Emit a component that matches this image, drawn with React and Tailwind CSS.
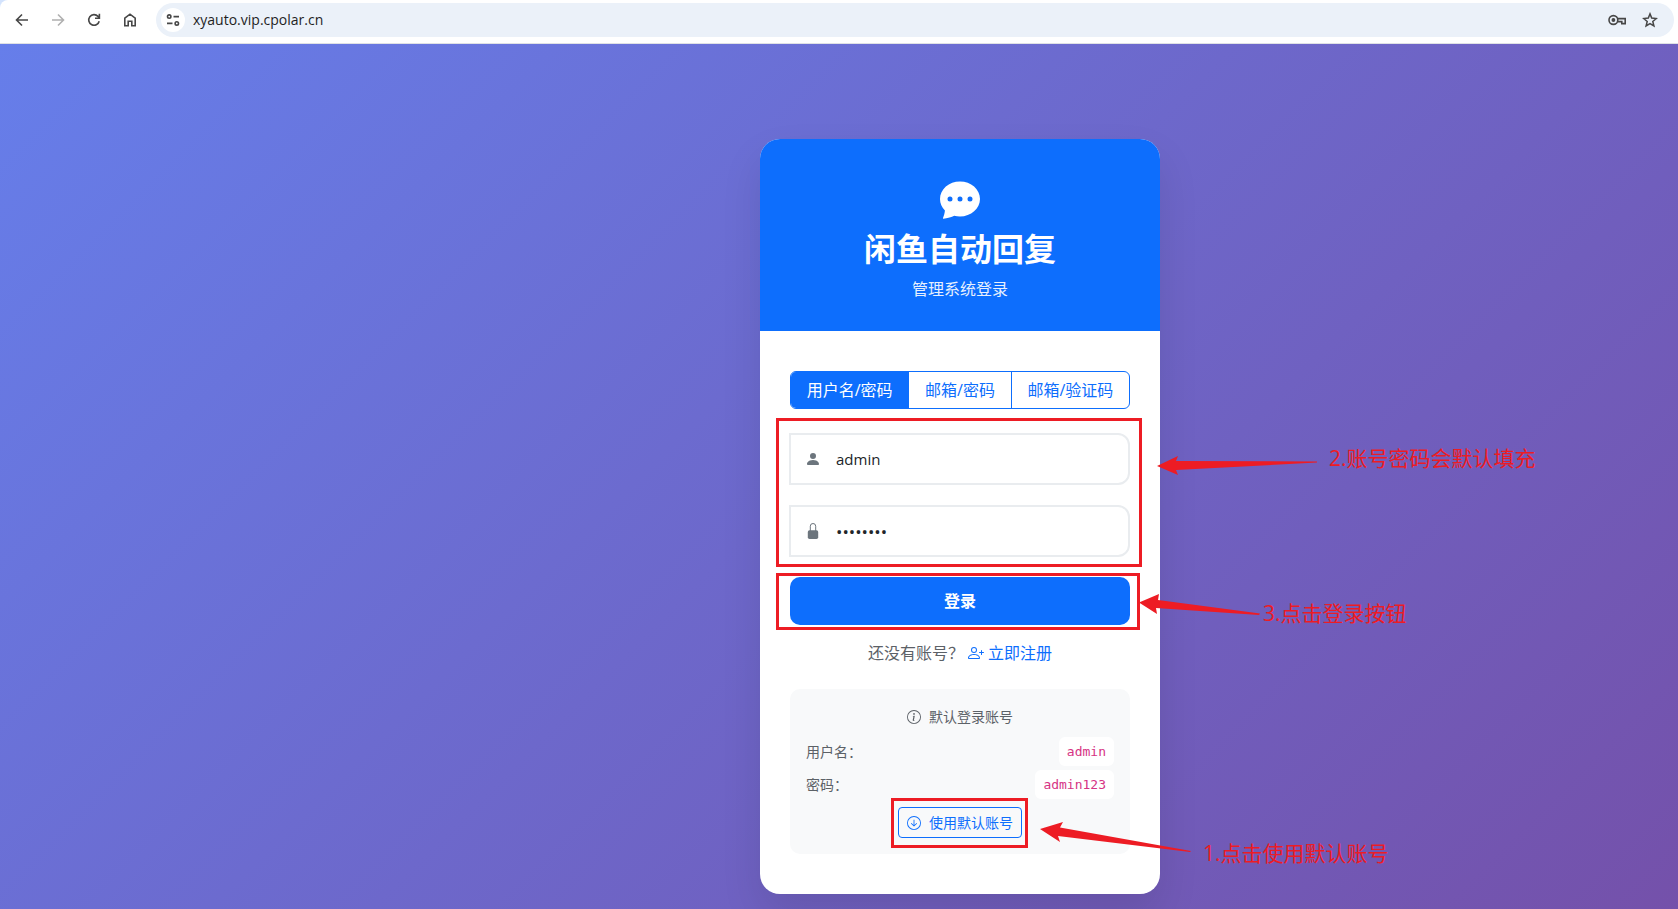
import { useState } from "react";
import {
  BsChatDotsFill,
  BsPersonFill,
  BsPersonPlus,
  BsInfoCircle,
  BsArrowDownCircle,
} from "react-icons/bs";

const TABS = ["用户名/密码", "邮箱/密码", "邮箱/验证码"];

function BrowserBar() {
  const line = { fill: "none", stroke: "currentColor", strokeWidth: 1.6 };
  return (
    <div className="bg-[#d3e3fd]">
      <header className="flex h-11 items-start rounded-tl-lg border-b border-[#dfe1e5] bg-white pt-[3px] pr-1 text-[#474747]">
        <nav className="flex h-[34px] flex-1 items-center gap-5 pl-3.5" aria-label="browser">
          <button type="button" aria-label="Back" className="size-4">
            <svg viewBox="0 0 16 16" className="size-4" {...line}>
              <path d="M14 8H3M8 2.5 2.5 8 8 13.5" />
            </svg>
          </button>
          <button type="button" aria-label="Forward" className="size-4 text-[#b0b0b0]">
            <svg viewBox="0 0 16 16" className="size-4" {...line}>
              <path d="M2 8h11M8 2.5 13.5 8 8 13.5" />
            </svg>
          </button>
          <button type="button" aria-label="Reload" className="size-4">
            <svg viewBox="0 0 16 16" className="size-4" {...line}>
              <path d="M13.2 9.2A5.3 5.3 0 1 1 12 4.4l1.3 1.4M13.4 1.8v4.4H9" />
            </svg>
          </button>
          <button type="button" aria-label="Home" className="size-4">
            <svg viewBox="0 0 16 16" className="size-4" {...line}>
              <path d="M2.8 6.2 8 2.2l5.2 4v7.6H9.8V9.2H6.2v4.6H2.8z" />
            </svg>
          </button>
          <div className="-ml-0.5 flex h-[34px] flex-1 items-center rounded-full bg-[#ebf1f9] pr-4 pl-[5px]">
            <button
              type="button"
              aria-label="Site information"
              className="flex size-6 items-center justify-center rounded-full bg-white"
            >
              <svg viewBox="0 0 14 14" className="size-3.5" {...line}>
                <circle cx="3.2" cy="3.6" r="1.7" />
                <path d="M7.5 3.6H13M1 10.4h5.5" />
                <circle cx="10.8" cy="10.4" r="1.7" />
              </svg>
            </button>
            <input
              aria-label="Address"
              defaultValue="xyauto.vip.cpolar.cn"
              className="ml-2 h-6 flex-1 bg-transparent pb-0.5 text-sm text-[#1f1f1f] outline-none"
            />
            <div className="flex items-center gap-4">
              <button type="button" aria-label="Passwords" className="h-4 w-[18px]">
                <svg viewBox="0 0 18 16" className="h-4 w-[18px]" {...line}>
                  <circle cx="5.4" cy="8" r="4.4" />
                  <circle cx="5.4" cy="8" r="1.9" fill="currentColor" stroke="none" />
                  <path d="M9.6 6.6h7.6v5h-3.4V9.6H9.6" />
                </svg>
              </button>
              <button type="button" aria-label="Bookmark" className="size-4">
                <svg viewBox="0 0 16 16" className="size-4" {...line} strokeWidth="1.5">
                  <path d="m8 1.9 1.7 4.2 4.6.4-3.5 3 1.1 4.5L8 11.6 4.1 14l1.1-4.5-3.5-3 4.6-.4z" />
                </svg>
              </button>
            </div>
          </div>
        </nav>
      </header>
    </div>
  );
}

function LockIcon({ className }) {
  return (
    <svg viewBox="0 0 16 16" className={className} fill="currentColor">
      <rect x="2.800" y="7.300" width="10.400" height="8.700" rx="1.700" />
      <path
        d="M5.300 8V3.200a2.700 2.700 0 0 1 5.400 0V8"
        fill="none"
        stroke="currentColor"
        strokeWidth="1"
      />
    </svg>
  );
}

function Field({ id, label, icon: Icon, textClass, ...input }) {
  return (
    <div className="-ml-px flex h-[52px] items-center rounded-r-xl border-2 border-[#e9ecef] bg-white">
      <label htmlFor={id} aria-label={label} className="flex w-11 justify-center">
        <Icon className="size-4 text-[#6c757d]" />
      </label>
      <input
        id={id}
        aria-label={label}
        className={
          "h-full min-w-0 flex-1 bg-transparent pl-px text-[#212529] outline-none " + textClass
        }
        {...input}
      />
    </div>
  );
}

function Account({ name, value }) {
  return (
    <div className="flex items-center justify-between">
      <span>{name}</span>
      <code className="rounded-md bg-white px-2 py-1 font-['DejaVu_Sans_Mono',monospace] text-[13px] leading-[21px] text-[#d63384]">
        {value}
      </code>
    </div>
  );
}

function Annotations() {
  return (
    <div className="pointer-events-none absolute inset-0 text-[21px] leading-7 whitespace-nowrap text-[#ed1c24]">
      <div className="absolute top-[279px] left-4 h-[149px] w-[366px] border-3 border-[#ed1c24]" />
      <div className="absolute top-[434px] left-4 h-[57px] w-[364px] border-3 border-[#ed1c24]" />
      <div className="absolute top-[659px] left-[131px] h-[50px] w-[137px] border-3 border-[#ed1c24]" />
      <svg
        viewBox="0 0 600 754"
        className="absolute top-0 left-0 h-[754px] w-[600px] max-w-none"
        fill="#ed1c24"
      >
        <path d="M397 327 418 317 416 322 557 322.500 557 323.500 416 331 418 336z" />
        <path d="M379 463.500 399 455 398 461 500 474.500 499 476 396 469 397 475z" />
        <path d="M280 690 303 683 300 688.500 431 712 430 713 298 697 300 703z" />
      </svg>
      <p className="absolute top-[305px] left-[569px]">2.账号密码会默认填充</p>
      <p className="absolute top-[460px] left-[503px]">3.点击登录按钮</p>
      <p className="absolute top-[700px] left-[443px]">1.点击使用默认账号</p>
    </div>
  );
}

export default function App() {
  const [tab, setTab] = useState(0);
  const [user, setUser] = useState("admin");
  const [password, setPassword] = useState("admin123");

  const fillDefault = () => {
    setUser("admin");
    setPassword("admin123");
  };

  return (
    <div className="flex h-screen flex-col overflow-hidden font-['Open_Sans','Noto_Sans_CJK_SC',sans-serif]">
      <BrowserBar />
      <main className="flex flex-1 items-start justify-center bg-[linear-gradient(135deg,#667eea_0%,#764ba2_100%)] bg-[length:1920px_945px] pt-[95px] pl-[242px]">
        <div className="relative w-[400px] shrink-0 rounded-[20px] bg-white shadow-[0_20px_40px_rgba(0,0,0,0.1)]">
          <div className="flex flex-col items-center rounded-t-[20px] bg-[#0d6efd] pt-10 pb-[30px] text-white">
            <BsChatDotsFill className="size-10" />
            <h1 className="mt-2.5 text-[32px] leading-10 font-bold">闲鱼自动回复</h1>
            <p className="mt-2 text-base leading-6 opacity-90">管理系统登录</p>
          </div>

          <div className="px-[30px] py-10">
            <div className="flex h-[38px] overflow-hidden rounded-md border border-[#0d6efd]">
              {TABS.map((name, i) => (
                <button
                  key={name}
                  type="button"
                  aria-pressed={tab === i}
                  onClick={() => setTab(i)}
                  className={
                    "flex-auto border-[#0d6efd] text-base not-last:border-r " +
                    (tab === i ? "bg-[#0d6efd] text-white" : "text-[#0d6efd]")
                  }
                >
                  {name}
                </button>
              ))}
            </div>

            <form className="mt-6" onSubmit={(e) => e.preventDefault()}>
              <div className="flex flex-col gap-5">
                <Field
                  id="username"
                  label="用户名"
                  icon={BsPersonFill}
                  textClass="text-[15px]"
                  value={user}
                  onChange={(e) => setUser(e.target.value)}
                />
                <Field
                  id="password"
                  label="密码"
                  icon={LockIcon}
                  textClass="text-[17px]"
                  type="password"
                  value={password}
                  onChange={(e) => setPassword(e.target.value)}
                />
              </div>
              <button
                type="submit"
                className="mt-5 h-12 w-full rounded-[10px] bg-[#0d6efd] text-base font-bold text-white"
              >
                登录
              </button>
            </form>

            <p className="mt-4 flex items-center justify-center gap-1 text-base leading-6 text-[#5c6167]">
              还没有账号？
              <a href="#register" className="flex items-center gap-1 text-[#0d6efd]">
                <BsPersonPlus className="size-4" />
                立即注册
              </a>
            </p>

            <section className="mt-6 rounded-[10px] bg-[#f8f9fa] p-4 text-sm text-[#5c6167]">
              <h2 className="mb-2 flex h-6 items-center justify-center gap-2">
                <BsInfoCircle className="size-3.5" />
                默认登录账号
              </h2>
              <div className="flex flex-col gap-1">
                <Account name="用户名：" value="admin" />
                <Account name="密码：" value="admin123" />
              </div>
              <button
                type="button"
                onClick={fillDefault}
                className="mx-auto mt-2 flex h-[31px] items-center gap-2 rounded border border-[#0d6efd] px-2 text-[#0d6efd]"
              >
                <BsArrowDownCircle className="size-3.5" />
                使用默认账号
              </button>
            </section>
          </div>

          <Annotations />
        </div>
      </main>
    </div>
  );
}
